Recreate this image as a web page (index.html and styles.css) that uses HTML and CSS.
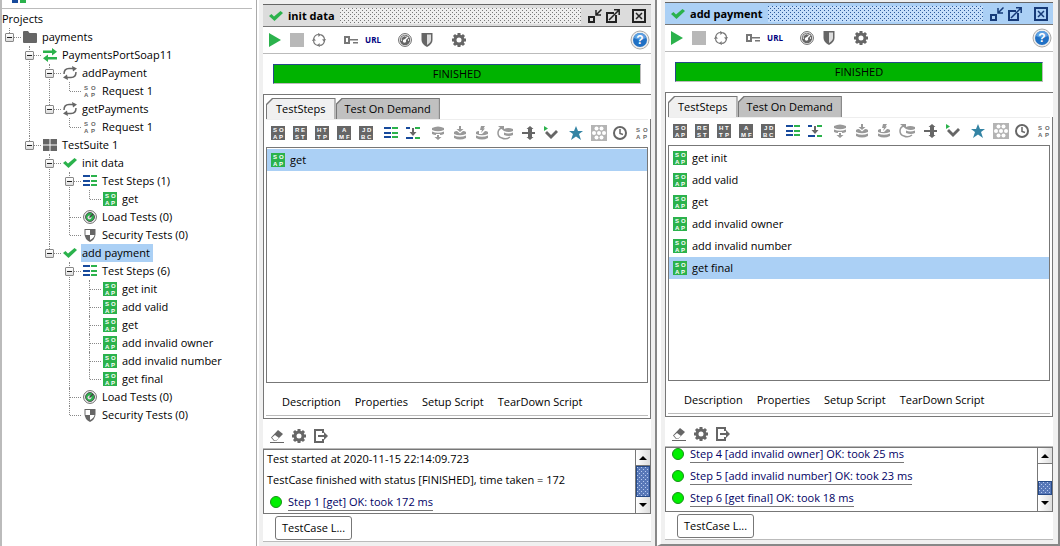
FILE: index.html
```html
<!DOCTYPE html>
<html lang="en">
<head>
<meta charset="utf-8">
<title>Projects</title>
<link rel="stylesheet" href="styles.css">
</head>
<body>
<svg class="defs" aria-hidden="true">
  <symbol id="folder" viewBox="0 0 14 14"><path fill="#666" d="M0 2q0-1 1-1h4l1.500 2H13q1 0 1 1v8q0 1-1 1H1q-1 0-1-1z"/></symbol>
  <symbol id="arrows" viewBox="0 0 14 14"><path fill="#2bb24c" d="M0 2.500h9V0l5 3.800-5 3.700V5H0zM14 9H5V6.500L0 10.200 5 14v-2.500h9z"/></symbol>
  <symbol id="cycle" viewBox="0 0 14 14"><path fill="none" stroke="#666" stroke-width="1.500" d="M1 8Q1 2.500 6 2.500h5M13 6q0 5.500-5 5.500H3"/><path fill="#666" d="M9 0l5 2.500-4 3zM5 14l-5-2.500 4-3z"/></symbol>
  <symbol id="soap-plain" viewBox="0 0 14 14"><g fill="#666"><text x="1" y="6">S</text><text x="8" y="6">O</text><text x="1" y="13">A</text><text x="8" y="13">P</text></g></symbol>
  <symbol id="soap-green" viewBox="0 0 14 14"><path fill="#2bb24c" d="M0 0h14v14H0z"/><g fill="#fff"><text x="2" y="6">S</text><text x="8" y="6">O</text><text x="2" y="13">A</text><text x="8" y="13">P</text></g></symbol>
  <symbol id="soap" viewBox="0 0 14 14"><path fill="#666" d="M0 0h14v14H0z"/><g fill="#fff"><text x="2" y="6">S</text><text x="8" y="6">O</text><text x="2" y="13">A</text><text x="8" y="13">P</text></g></symbol>
  <symbol id="rest" viewBox="0 0 14 14"><path fill="#666" d="M0 0h14v14H0z"/><g fill="#fff"><text x="2" y="6">R</text><text x="8" y="6">E</text><text x="2" y="13">S</text><text x="8" y="13">T</text></g></symbol>
  <symbol id="http" viewBox="0 0 14 14"><path fill="#666" d="M0 0h14v14H0z"/><g fill="#fff"><text x="2" y="6">H</text><text x="8" y="6">T</text><text x="2" y="13">T</text><text x="8" y="13">P</text></g></symbol>
  <symbol id="amf" viewBox="0 0 14 14"><path fill="#666" d="M0 0h14v14H0z"/><g fill="#fff"><text x="5" y="6">A</text><text x="2" y="13">M</text><text x="9" y="13">F</text></g></symbol>
  <symbol id="jdbc" viewBox="0 0 14 14"><path fill="#666" d="M0 0h14v14H0z"/><g fill="#fff"><text x="3" y="6">J</text><text x="8" y="6">D</text><text x="2" y="13">B</text><text x="8" y="13">C</text></g></symbol>
  <symbol id="suite" viewBox="0 0 14 14"><path fill="#666" d="M0 1h6.500v5.500H0zM7.500 1H14v5.500H7.500zM0 7.500h6.500V13H0zM7.500 7.500H14V13H7.500z"/></symbol>
  <symbol id="check" viewBox="0 0 14 14"><path fill="#2bb24c" d="M0 7l2.500-2L5 7.500 11.500 2 14 4 5.500 12z"/></symbol>
  <symbol id="steps" viewBox="0 0 14 14"><path fill="#174a9c" d="M0 1h7v2H0zM0 6h7v2H0zM0 10h7v2H0z"/><path fill="#2bb24c" d="M8 1h6v2H8zM8 6h6v2H8zM8 10h6v2H8z"/></symbol>
  <symbol id="insert" viewBox="0 0 14 14"><path fill="#174a9c" d="M0 1h4v2H0zM0 11h7v2H0z"/><path fill="#2bb24c" d="M9 1h5v2H9zM9 11h5v2H9z"/><path fill="#666" d="M6 2h2v4h2.500L7 10 3.500 6H6z"/></symbol>
  <symbol id="load" viewBox="0 0 14 14"><circle cx="7" cy="7" r="6.400" fill="#fff" stroke="#666"/><circle cx="7" cy="7" r="4.500" fill="#2bb24c" stroke="#555"/><circle cx="6.500" cy="7.500" r="2" fill="#ddd"/><path stroke="#444" stroke-width="1.300" d="M6.500 7.500 10 4"/></symbol>
  <symbol id="meter" viewBox="0 0 14 14"><circle cx="7" cy="7" r="6.400" fill="#fff" stroke="#666"/><circle cx="7" cy="7" r="5.200" fill="#666"/><path fill="none" stroke="#ddd" d="M3.500 8a3.500 3.500 0 0 1 5-4.500M10.500 6v2"/><path stroke="#fff" stroke-width="1.500" d="M6 8l4-4"/><circle cx="6.500" cy="8" r="1.700" fill="#fff"/></symbol>
  <symbol id="shield-tree" viewBox="0 0 14 14"><path fill="#666" d="M1.500 1h11v5q0 5-5.500 8-5.500-3-5.500-8z"/><path fill="#fff" d="M2.500 2H7v5H2.500zM7 7h4.500Q11 10 7 12z"/></symbol>
  <symbol id="shield" viewBox="0 0 14 14"><path fill="#666" d="M1.500 0h11v7q0 4-5.500 7-5.500-3-5.500-7z"/><path fill="#ddd" d="M7 1.500h4V7q0 2.500-4 5z"/></symbol>
  <symbol id="play" viewBox="0 0 14 14"><path fill="#2bb24c" d="M1 0v14l12-7z"/></symbol>
  <symbol id="stop" viewBox="0 0 14 14"><path fill="#b8b8b8" d="M0 0h14v14H0z"/></symbol>
  <symbol id="loop" viewBox="0 0 14 14"><circle cx="7" cy="7" r="5.500" fill="none" stroke="#777" stroke-width="1.200" stroke-dasharray="6.900 1.740" stroke-dashoffset="7.800"/><path fill="#777" d="M6 0l3 1.600L6.500 4zM14 6l-1.600 3L10 6.500zM8 14l-3-1.600L7.500 10zM0 8l1.600-3L4 7.500z"/></symbol>
  <symbol id="key" viewBox="0 0 14 14"><path fill="#777" d="M0 3h6v8H0zM6 6h8v1.500H6zM9 9h5v1.500H9z"/><path fill="#fff" d="M2 5h2v4H2z"/></symbol>
  <symbol id="gear" viewBox="0 0 14 14"><circle cx="7" cy="7" r="4" fill="none" stroke="#666" stroke-width="3"/><path stroke="#666" stroke-width="3" d="M7 0v3M7 11v3M0 7h3M11 7h3M2 2l2 2M10 10l2 2M12 2l-2 2M4 10l-2 2"/></symbol>
  <symbol id="help" viewBox="0 0 20 20"><circle cx="10" cy="10" r="9" fill="#eee" stroke="#aaa"/><circle cx="10" cy="10" r="7" fill="#2070c4"/><path fill="#5da0e2" d="M4 8a6 5 0 0 1 12 0q-6 3-12 0z"/><text class="help-mark" x="10" y="14" fill="#fff">?</text></symbol>
  <symbol id="db-down" viewBox="0 0 14 14"><path fill="#999" d="M1 2q6-3 12 0v2Q7 6.500 1 4zM1 5.500q6 2.500 12 0V8q-2 1-4 1V8H5v1Q3 9 1 8zM6 9h2v2h2.500L7 14l-3.500-3H6z"/></symbol>
  <symbol id="db-in" viewBox="0 0 14 14"><path fill="#999" d="M6 0h2v3h2.500L7 6 3.500 3H6zM1 6q1-1 3-1l3 2.500L10 5q2 0 3 1v2Q7 10.500 1 8zM1 9.500q6 2.500 12 0V12q-6 3-12 0z"/></symbol>
  <symbol id="db-flash" viewBox="0 0 14 14"><path fill="#999" d="M6 0h4L8.500 2.500H10L6 7l1-3H5zM1 6q1-1 3-1v3h3l3-3q2 0 3 1v2Q7 10.500 1 8zM1 9.500q6 2.500 12 0V12q-6 3-12 0z"/></symbol>
  <symbol id="db-loop" viewBox="0 0 16 14"><path fill="none" stroke="#999" stroke-width="1.500" d="M5 2Q1 3 1 7t4 5q4 2 8-1"/><path fill="#999" d="M1 0h6v5zM7 3q4-2 9 0v2q-4 2-9 0zM7 6.500q4 2 9 0V9q-4 2-9 0z"/></symbol>
  <symbol id="transfer" viewBox="0 0 14 14"><path fill="#666" d="M0 6h6V3H4.500L8 0l3.500 3H10v3h3v2h-3v3h1.500L8 14l-3.500-3H6V8H0z"/></symbol>
  <symbol id="goto" viewBox="0 0 14 14"><path fill="#666" d="M1 7l2-2 4 4 5-5 2 2-7 7z"/><path fill="#2bb24c" d="M0 0l4 2.500L0 5z"/></symbol>
  <symbol id="star" viewBox="0 0 14 14"><path fill="#3484a4" d="M7 0l2 5h5l-4 3 2 6-5-3.500L2 14l2-6-4-3h5z"/></symbol>
  <symbol id="balls" viewBox="0 0 16 16"><path fill="#b4b4b4" d="M0 0h16v16H0z"/><g fill="#fff"><circle cx="5.500" cy="3.500" r="2"/><circle cx="10.500" cy="3.500" r="2"/><circle cx="3" cy="8" r="2"/><circle cx="8" cy="8" r="2"/><circle cx="13" cy="8" r="2"/><circle cx="5.500" cy="12.500" r="2"/><circle cx="10.500" cy="12.500" r="2"/></g></symbol>
  <symbol id="clock" viewBox="0 0 14 14"><circle cx="7" cy="7" r="6" fill="none" stroke="#666" stroke-width="2"/><path fill="none" stroke="#666" stroke-width="1.500" d="M7 3v4.500l3 1"/></symbol>
  <symbol id="eraser" viewBox="0 0 14 14"><path fill="#666" d="M8 1l5 4-7 7H4L1 8.500zM0 13h14v1H0z"/><path fill="#fff" d="M5 6l4 3-3 2.500H4.500L2 8.500z"/></symbol>
  <symbol id="exit" viewBox="0 0 14 14"><path fill="none" stroke="#666" stroke-width="2" d="M9 4V1H1v12h8v-3"/><path fill="#666" d="M4 6h6V3l4 4-4 4V8H4z"/></symbol>
  <symbol id="minimize" viewBox="0 0 14 14"><path fill="none" stroke="currentColor" stroke-width="2" d="M1 8h5v5H1z"/><path fill="none" stroke="currentColor" stroke-width="1.500" d="M13.500.500 8.500 5.500M8 1v5h5"/></symbol>
  <symbol id="maximize" viewBox="0 0 14 14"><path fill="none" stroke="currentColor" stroke-width="2" d="M8 4H1v9h9V6"/><path fill="none" stroke="currentColor" stroke-width="1.500" d="M3 11 13 1M8 .800h5.200V6"/></symbol>
  <symbol id="close" viewBox="0 0 14 14"><path fill="none" stroke="currentColor" stroke-width="2" d="M1 1h12v12H1z"/><path stroke="currentColor" stroke-width="1.500" d="M4 4l6 6M10 4l-6 6"/></symbol>
</svg>
<div class="app">
  <aside class="sidebar">
    <div class="sidebar-top"><span class="mark"></span></div>
    <div class="tree-title">Projects</div>
    <ul class="tree">
      <li><div class="row"><button class="toggle" aria-label="Collapse"></button><svg class="icon"><use href="#folder"/></svg><span class="label">payments</span></div>
        <ul>
          <li><div class="row"><button class="toggle" aria-label="Collapse"></button><svg class="icon"><use href="#arrows"/></svg><span class="label">PaymentsPortSoap11</span></div>
            <ul>
              <li><div class="row"><button class="toggle" aria-label="Collapse"></button><svg class="icon"><use href="#cycle"/></svg><span class="label">addPayment</span></div>
                <ul><li><div class="row"><svg class="icon"><use href="#soap-plain"/></svg><span class="label">Request 1</span></div></li></ul>
              </li>
              <li><div class="row"><button class="toggle" aria-label="Collapse"></button><svg class="icon"><use href="#cycle"/></svg><span class="label">getPayments</span></div>
                <ul><li><div class="row"><svg class="icon"><use href="#soap-plain"/></svg><span class="label">Request 1</span></div></li></ul>
              </li>
            </ul>
          </li>
          <li><div class="row"><button class="toggle" aria-label="Collapse"></button><svg class="icon"><use href="#suite"/></svg><span class="label">TestSuite 1</span></div>
            <ul>
              <li><div class="row"><button class="toggle" aria-label="Collapse"></button><svg class="icon"><use href="#check"/></svg><span class="label">init data</span></div>
                <ul>
                  <li><div class="row"><button class="toggle" aria-label="Collapse"></button><svg class="icon"><use href="#steps"/></svg><span class="label">Test Steps (1)</span></div>
                    <ul><li><div class="row"><svg class="icon"><use href="#soap-green"/></svg><span class="label">get</span></div></li></ul>
                  </li>
                  <li><div class="row"><svg class="icon"><use href="#load"/></svg><span class="label">Load Tests (0)</span></div></li>
                  <li><div class="row"><svg class="icon"><use href="#shield-tree"/></svg><span class="label">Security Tests (0)</span></div></li>
                </ul>
              </li>
              <li><div class="row"><button class="toggle" aria-label="Collapse"></button><svg class="icon"><use href="#check"/></svg><span class="label selected">add payment</span></div>
                <ul>
                  <li><div class="row"><button class="toggle" aria-label="Collapse"></button><svg class="icon"><use href="#steps"/></svg><span class="label">Test Steps (6)</span></div>
                    <ul>
                      <li><div class="row"><svg class="icon"><use href="#soap-green"/></svg><span class="label">get init</span></div></li>
                      <li><div class="row"><svg class="icon"><use href="#soap-green"/></svg><span class="label">add valid</span></div></li>
                      <li><div class="row"><svg class="icon"><use href="#soap-green"/></svg><span class="label">get</span></div></li>
                      <li><div class="row"><svg class="icon"><use href="#soap-green"/></svg><span class="label">add invalid owner</span></div></li>
                      <li><div class="row"><svg class="icon"><use href="#soap-green"/></svg><span class="label">add invalid number</span></div></li>
                      <li><div class="row"><svg class="icon"><use href="#soap-green"/></svg><span class="label">get final</span></div></li>
                    </ul>
                  </li>
                  <li><div class="row"><svg class="icon"><use href="#load"/></svg><span class="label">Load Tests (0)</span></div></li>
                  <li><div class="row"><svg class="icon"><use href="#shield-tree"/></svg><span class="label">Security Tests (0)</span></div></li>
                </ul>
              </li>
            </ul>
          </li>
        </ul>
      </li>
    </ul>
  </aside>

  <section class="window">
    <header class="titlebar"><svg class="icon"><use href="#check"/></svg><h2>init data</h2><span class="grip"></span>
      <button class="tool" aria-label="Minimize"><svg class="icon"><use href="#minimize"/></svg></button><button class="tool" aria-label="Maximize"><svg class="icon"><use href="#maximize"/></svg></button><button class="tool close" aria-label="Close"><svg class="icon"><use href="#close"/></svg></button></header>
    <div class="toolbar">
      <button class="tool" aria-label="Run"><svg class="icon"><use href="#play"/></svg></button><button class="tool" aria-label="Stop"><svg class="icon"><use href="#stop"/></svg></button><button class="tool" aria-label="Loop"><svg class="icon"><use href="#loop"/></svg></button>
      <button class="tool spaced" aria-label="Credentials"><svg class="icon"><use href="#key"/></svg></button><button class="tool url">URL</button>
      <button class="tool spaced" aria-label="Load test"><svg class="icon"><use href="#meter"/></svg></button><button class="tool" aria-label="Security test"><svg class="icon"><use href="#shield"/></svg></button>
      <button class="tool spaced" aria-label="Options"><svg class="icon"><use href="#gear"/></svg></button><button class="tool help" aria-label="Help"><svg class="icon-large"><use href="#help"/></svg></button>
    </div>
    <div class="progress-area"><div class="progress">FINISHED</div></div>
    <div class="panel">
      <div class="tabs"><button class="tab active">TestSteps</button><button class="tab">Test On Demand</button></div>
      <div class="panel-body">
        <div class="step-tools">
          <button class="tool" aria-label="SOAP"><svg class="icon"><use href="#soap"/></svg></button><button class="tool" aria-label="REST"><svg class="icon"><use href="#rest"/></svg></button><button class="tool" aria-label="HTTP"><svg class="icon"><use href="#http"/></svg></button><button class="tool" aria-label="AMF"><svg class="icon"><use href="#amf"/></svg></button><button class="tool" aria-label="JDBC"><svg class="icon"><use href="#jdbc"/></svg></button>
          <button class="tool gap" aria-label="Properties"><svg class="icon"><use href="#steps"/></svg></button><button class="tool" aria-label="Transfer"><svg class="icon"><use href="#insert"/></svg></button>
          <button class="tool gap" aria-label="Data source"><svg class="icon"><use href="#db-down"/></svg></button><button class="tool" aria-label="Data sink"><svg class="icon"><use href="#db-in"/></svg></button><button class="tool" aria-label="Data generator"><svg class="icon"><use href="#db-flash"/></svg></button><button class="tool" aria-label="Data loop"><svg class="icon wide"><use href="#db-loop"/></svg></button>
          <button class="tool gap" aria-label="Goto"><svg class="icon"><use href="#transfer"/></svg></button><button class="tool" aria-label="Assertion"><svg class="icon"><use href="#goto"/></svg></button>
          <button class="tool gap" aria-label="Script"><svg class="icon"><use href="#star"/></svg></button><button class="tool" aria-label="Mock"><svg class="icon wide"><use href="#balls"/></svg></button><button class="tool" aria-label="Delay"><svg class="icon"><use href="#clock"/></svg></button><button class="tool" aria-label="Mock response"><svg class="icon"><use href="#soap-plain"/></svg></button>
        </div>
        <ul class="steps"><li class="selected"><svg class="icon"><use href="#soap-green"/></svg>get</li></ul>
        <div class="inspectors"><button>Description</button><button>Properties</button><button>Setup Script</button><button>TearDown Script</button></div>
      </div>
    </div>
    <div class="toolbar log-tools"><button class="tool" aria-label="Clear"><svg class="icon"><use href="#eraser"/></svg></button><button class="tool" aria-label="Log options"><svg class="icon"><use href="#gear"/></svg></button><button class="tool" aria-label="Export"><svg class="icon"><use href="#exit"/></svg></button></div>
    <div class="log">
      <div class="log-lines"><p>Test started at 2020-11-15 22:14:09.723</p><p>TestCase finished with status [FINISHED], time taken = 172</p><p class="step"><i class="dot"></i><a href="#step1">Step 1 [get] OK: took 172 ms</a></p></div>
      <div class="scroll"><button class="up" aria-label="Scroll up"></button><span class="thumb"></span><button class="down" aria-label="Scroll down"></button></div>
    </div>
    <footer class="bottom"><button>TestCase L...</button></footer>
  </section>

  <section class="window current">
    <header class="titlebar"><svg class="icon"><use href="#check"/></svg><h2>add payment</h2><span class="grip"></span>
      <button class="tool" aria-label="Minimize"><svg class="icon"><use href="#minimize"/></svg></button><button class="tool" aria-label="Maximize"><svg class="icon"><use href="#maximize"/></svg></button><button class="tool close" aria-label="Close"><svg class="icon"><use href="#close"/></svg></button></header>
    <div class="toolbar">
      <button class="tool" aria-label="Run"><svg class="icon"><use href="#play"/></svg></button><button class="tool" aria-label="Stop"><svg class="icon"><use href="#stop"/></svg></button><button class="tool" aria-label="Loop"><svg class="icon"><use href="#loop"/></svg></button>
      <button class="tool spaced" aria-label="Credentials"><svg class="icon"><use href="#key"/></svg></button><button class="tool url">URL</button>
      <button class="tool spaced" aria-label="Load test"><svg class="icon"><use href="#meter"/></svg></button><button class="tool" aria-label="Security test"><svg class="icon"><use href="#shield"/></svg></button>
      <button class="tool spaced" aria-label="Options"><svg class="icon"><use href="#gear"/></svg></button><button class="tool help" aria-label="Help"><svg class="icon-large"><use href="#help"/></svg></button>
    </div>
    <div class="progress-area"><div class="progress">FINISHED</div></div>
    <div class="panel">
      <div class="tabs"><button class="tab active">TestSteps</button><button class="tab">Test On Demand</button></div>
      <div class="panel-body">
        <div class="step-tools">
          <button class="tool" aria-label="SOAP"><svg class="icon"><use href="#soap"/></svg></button><button class="tool" aria-label="REST"><svg class="icon"><use href="#rest"/></svg></button><button class="tool" aria-label="HTTP"><svg class="icon"><use href="#http"/></svg></button><button class="tool" aria-label="AMF"><svg class="icon"><use href="#amf"/></svg></button><button class="tool" aria-label="JDBC"><svg class="icon"><use href="#jdbc"/></svg></button>
          <button class="tool gap" aria-label="Properties"><svg class="icon"><use href="#steps"/></svg></button><button class="tool" aria-label="Transfer"><svg class="icon"><use href="#insert"/></svg></button>
          <button class="tool gap" aria-label="Data source"><svg class="icon"><use href="#db-down"/></svg></button><button class="tool" aria-label="Data sink"><svg class="icon"><use href="#db-in"/></svg></button><button class="tool" aria-label="Data generator"><svg class="icon"><use href="#db-flash"/></svg></button><button class="tool" aria-label="Data loop"><svg class="icon wide"><use href="#db-loop"/></svg></button>
          <button class="tool gap" aria-label="Goto"><svg class="icon"><use href="#transfer"/></svg></button><button class="tool" aria-label="Assertion"><svg class="icon"><use href="#goto"/></svg></button>
          <button class="tool gap" aria-label="Script"><svg class="icon"><use href="#star"/></svg></button><button class="tool" aria-label="Mock"><svg class="icon wide"><use href="#balls"/></svg></button><button class="tool" aria-label="Delay"><svg class="icon"><use href="#clock"/></svg></button><button class="tool" aria-label="Mock response"><svg class="icon"><use href="#soap-plain"/></svg></button>
        </div>
        <ul class="steps">
          <li><svg class="icon"><use href="#soap-green"/></svg>get init</li>
          <li><svg class="icon"><use href="#soap-green"/></svg>add valid</li>
          <li><svg class="icon"><use href="#soap-green"/></svg>get</li>
          <li><svg class="icon"><use href="#soap-green"/></svg>add invalid owner</li>
          <li><svg class="icon"><use href="#soap-green"/></svg>add invalid number</li>
          <li class="selected"><svg class="icon"><use href="#soap-green"/></svg>get final</li>
        </ul>
        <div class="inspectors"><button>Description</button><button>Properties</button><button>Setup Script</button><button>TearDown Script</button></div>
      </div>
    </div>
    <div class="toolbar log-tools"><button class="tool" aria-label="Clear"><svg class="icon"><use href="#eraser"/></svg></button><button class="tool" aria-label="Log options"><svg class="icon"><use href="#gear"/></svg></button><button class="tool" aria-label="Export"><svg class="icon"><use href="#exit"/></svg></button></div>
    <div class="log">
      <div class="log-lines at-end"><p class="step"><i class="dot"></i><a href="#step4">Step 4 [add invalid owner] OK: took 25 ms</a></p><p class="step"><i class="dot"></i><a href="#step5">Step 5 [add invalid number] OK: took 23 ms</a></p><p class="step"><i class="dot"></i><a href="#step6">Step 6 [get final] OK: took 18 ms</a></p></div>
      <div class="scroll"><button class="up" aria-label="Scroll up"></button><span class="track"></span><span class="thumb"></span><button class="down" aria-label="Scroll down"></button></div>
    </div>
    <footer class="bottom"><button>TestCase L...</button></footer>
  </section>
</div>
</body>
</html>
```

FILE: styles.css
```css
* { box-sizing: border-box; }
body { margin: 0; background: #f0f0f0; color: #000; font: 11px/18px "Open Sans", "Noto Sans", sans-serif; }
ul { list-style: none; margin: 0; padding: 0; }
p, h2 { margin: 0; font-size: inherit; }
button { font: inherit; color: inherit; padding: 0; margin: 0; border: 0; background: none; white-space: nowrap; }
.defs { display: none; }
symbol text { font: 700 6px "Liberation Sans", sans-serif; }
symbol .help-mark { font-size: 12px; text-anchor: middle; }
.icon { width: 14px; height: 14px; flex: none; display: block; }
.icon.wide { width: 16px; height: 16px; }
.icon-large { width: 20px; height: 20px; display: block; }
.app { display: grid; grid-template-columns: 257px minmax(0, 400fr) minmax(0, 403fr); min-height: 100vh; }

.sidebar { background: #fff; border-left: 2px solid #bbb; border-right: 1px solid #aaa; }
.sidebar-top { height: 9px; margin-right: 4px; border-bottom: 1px solid #bbb; padding-left: 10px; }
.mark { display: block; width: 14px; height: 3px; background: linear-gradient(90deg, #174a9c 6px, #fff 6px 8px, #2bb24c 8px); }
.tree-title { height: 19px; line-height: 20px; }
.tree { padding-left: 2px; }
.tree ul { padding-left: 20px; }
.tree li { position: relative; }
.tree li::before { content: ""; position: absolute; left: 5px; top: 0; height: 100%; border-left: 1px dotted #888; }
.tree li:last-child::before { height: 9px; }
.row { display: flex; align-items: center; height: 18px; padding-left: 19px; position: relative; }
.row::before { content: ""; position: absolute; left: 6px; top: 9px; width: 11px; border-top: 1px dotted #888; }
.toggle { position: absolute; left: 1px; top: 5px; width: 9px; height: 9px; border: 1px solid #888; border-radius: 1px; background: linear-gradient(#222, #222) center / 5px 1px no-repeat, linear-gradient(#fff, #ddd); }
.label { margin-left: 4px; padding: 0 3px 0 1px; white-space: nowrap; }
.selected { background: #abd0f5; }

.window { display: flex; flex-direction: column; min-width: 0; padding: 4px; border-left: 2px solid #fff; border-right: 2px solid #888; background: #f0f0f0; }
.window.current { padding: 2px 5px 4px 4px; border-left-width: 4px; border-bottom: 2px solid #888; }
.titlebar { display: flex; align-items: center; height: 23px; flex: none; padding: 0 5px 0 6px; background: #dcdcdc; border-top: 1px solid #666; border-bottom: 1px solid #777; color: #222; }
.titlebar h2 { margin: 0 5px; color: #000; font-weight: 700; white-space: nowrap; }
.grip { flex: 1; height: 16px; margin-right: 7px; background-color: #eee; background-image: conic-gradient(from 270deg at 1px 1px, #777 90deg, transparent 0), conic-gradient(from 270deg at 1px 1px, #777 90deg, transparent 0); background-size: 4px 4px; background-position: 0 0, 2px 2px; }
.titlebar .tool { margin-right: 4px; }
.titlebar .close { margin: 0 0 0 8px; }
.current .titlebar { background: #abd0f5; color: #163a78; }
.current .grip { background-color: #c4defa; background-image: conic-gradient(from 270deg at 1px 1px, #2c5a9c 90deg, transparent 0), conic-gradient(from 270deg at 1px 1px, #2c5a9c 90deg, transparent 0); }
.toolbar { display: flex; align-items: center; gap: 8px; height: 27px; flex: none; padding: 0 1px 0 5px; background: #fff; border-bottom: 1px solid #bbb; }
.tool { flex: none; width: 14px; }
.spaced { margin-left: 10px; }
.url { display: flex; justify-content: center; color: #000080; font-size: 8px; font-weight: 700; }
.help { width: 20px; margin-left: auto; }
.progress-area { height: 40px; flex: none; padding: 10px 10px 0; background: #fff; }
.progress { height: 20px; background: #00b300; border: 1px solid #bbb; border-top-color: #264a88; border-left-color: #264a88; line-height: 18px; text-align: center; }
.panel { display: flex; flex-direction: column; flex: 1; background: #fff; border-top: 1px solid #777; border-left: 1px solid #777; border-bottom: 1px solid #777; }
.tabs { display: flex; height: 24px; flex: none; padding: 3px 0 0 2px; }
.tab { position: relative; isolation: isolate; padding: 0 9px; background: #777; clip-path: polygon(0 6px, 6px 0, 100% 0, 100% 100%, 0 100%); }
.tab.active { padding: 0 10px; }
.tab::before { content: ""; position: absolute; inset: 1px 1px 0; z-index: -1; background: #c0c0c0; clip-path: polygon(0 6px, 6px 0, 100% 0, 100% 100%, 0 100%); }
.tab.active::before { background: #f0f0f0; }
.panel-body { display: flex; flex-direction: column; flex: 1; padding: 0 2px 2px; border-right: 1px solid #777; }
.step-tools { display: flex; align-items: center; gap: 8px; height: 28px; flex: none; padding: 0 0 2px 5px; border-top: 1px solid #eee; overflow: hidden; }
.gap { margin-left: 3px; }
.steps { flex: 1; padding: 1px 0; border: 1px solid #777; }
.steps li { display: flex; align-items: center; gap: 5px; height: 22px; padding-left: 4px; }
.inspectors { display: flex; gap: 14px; height: 33px; flex: none; padding: 5px 0 0 16px; border-bottom: 1px solid #bbb; font-weight: 500; }
.log-tools { height: 30px; padding-left: 7px; padding-top: 5px; }
.log { display: flex; height: 65px; flex: none; background: #fff; border: 1px solid #777; border-right: 0; }
.log-lines { display: flex; flex-direction: column; flex: 1; min-width: 0; padding: 0 3px; overflow: hidden; }
.log-lines p { height: 21px; flex: none; line-height: 18px; white-space: nowrap; }
.log-lines.at-end { justify-content: flex-end; padding-bottom: 1px; }
.log-lines.at-end p { height: 22px; }
.log-lines .step { display: flex; align-items: center; gap: 6px; padding: 0 0 2px 3px; }
.dot { width: 12px; height: 12px; border-radius: 50%; background: #00f000; border: 1px solid #169016; }
.step a { color: #000064; text-decoration: none; line-height: 17px; border-bottom: 1px solid #777; }
.scroll { display: flex; flex-direction: column; width: 16px; flex: none; border-left: 1px solid #777; border-right: 1px solid #777; }
.up, .down { display: grid; place-items: center; height: 16px; flex: none; background: linear-gradient(90deg, #fff, #ddd); }
.up { border-bottom: 1px solid #777; }
.up::before { content: ""; border: 4px solid transparent; border-top: 0; border-bottom-color: #000; }
.down::before { content: ""; border: 4px solid transparent; border-bottom: 0; border-top-color: #000; }
.thumb { flex: 1; border: 1px solid #264a88; background-color: #5878b8; background-image: conic-gradient(from 270deg at 1px 1px, #b8ccf0 90deg, transparent 0), conic-gradient(from 270deg at 1px 1px, #b8ccf0 90deg, transparent 0); background-size: 4px 4px; background-position: 0 0, 2px 2px; }
.track { height: 17px; flex: none; }
.bottom { height: 28px; flex: none; padding: 2px 0 0 12px; background: #fff; border-bottom: 1px solid #bbb; }
.bottom button { height: 24px; padding: 0 6px; border: 1px solid #777; border-radius: 3px; background: #fff; }
```
